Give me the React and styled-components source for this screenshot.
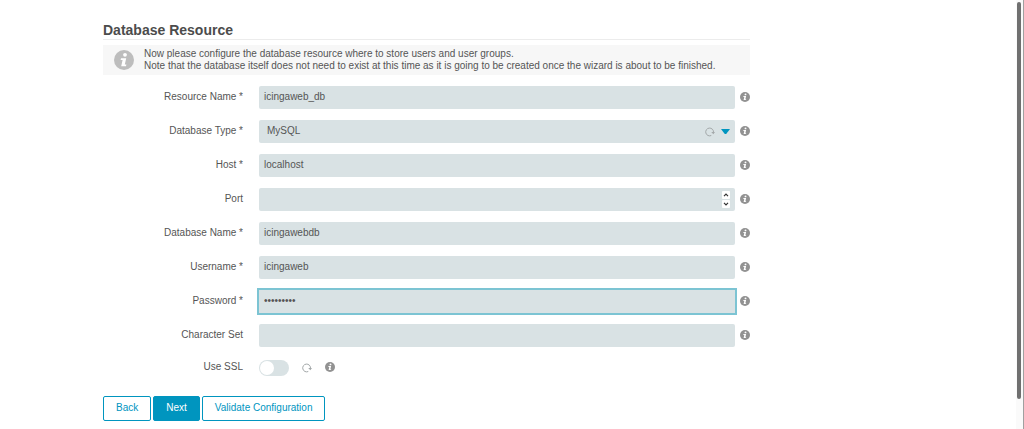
import React from 'react';
import styled, { createGlobalStyle, css, ThemeProvider } from 'styled-components';

const theme = {
  colors: {
    text: '#555',
    heading: '#4c4c4c',
    field: '#d9e2e4',
    primary: '#0095bf',
    focus: '#7cc4d3',
    icon: '#929292',
    muted: '#a3a8a9',
    hint: '#f7f7f7',
    line: '#ececec',
  },
};

const GlobalStyle = createGlobalStyle`
  * {
    box-sizing: border-box;
  }
  body {
    margin: 0;
    background-color: #fff;
    color: ${theme.colors.text};
    font-family: 'Liberation Sans', Arial, Helvetica, sans-serif;
    font-size: 10px;
    line-height: 12px;
  }
`;
const Page = styled.main`
  padding: 22px 24px 8px 103px;
`;
const Wizard = styled.form`
  max-width: 647px;
`;
const Title = styled.h1`
  margin: 0 0 5px;
  padding-bottom: 1px;
  border-bottom: 1px solid ${({ theme }) => theme.colors.line};
  color: ${({ theme }) => theme.colors.heading};
  font-size: 14px;
  line-height: 16px;
`;
const Hint = styled.div`
  display: flex;
  align-items: center;
  gap: 10px;
  min-height: 30px;
  margin-bottom: 11px;
  padding: 3px 11px;
  background-color: ${({ theme }) => theme.colors.hint};
`;
const HintText = styled.p`
  margin: 0;
`;
const Fields = styled.div`
  display: grid;
  gap: 11px;
`;
const Row = styled.div`
  display: grid;
  grid-template-columns: 140px 1fr 10px;
  align-items: center;
  column-gap: 5px;
  min-height: ${({ $short }) => ($short ? 19 : 23)}px;
`;
const Label = styled.label`
  padding-bottom: 2px;
  text-align: right;
`;
const Control = styled.div`
  display: flex;
  align-items: center;
  position: relative;
  margin-left: 11px;
`;
const HelpIcon = styled.span`
  display: flex;
  padding-bottom: 2px;
`;
const fieldStyle = css`
  width: 100%;
  height: 23px;
  padding: 0 5px 2px;
  border: 0;
  border-radius: ${({ $active }) => ($active ? 0 : 2)}px;
  background-color: ${({ theme }) => theme.colors.field};
  color: inherit;
  font: inherit;
`;
const Input = styled.input`
  ${fieldStyle}
  appearance: textfield;
  outline: ${({ $active, theme }) => ($active ? `2px solid ${theme.colors.focus}` : 'none')};

  &::-webkit-inner-spin-button {
    display: none;
  }
`;
const Select = styled.select`
  ${fieldStyle}
  padding-left: 8px;
  appearance: none;
`;
const Adornment = styled.div`
  display: flex;
  align-items: center;
  gap: 6px;
  position: absolute;
  right: 5px;
  pointer-events: none;
`;
const Spinner = styled.div`
  display: grid;
  gap: 1px;
`;
const SpinButton = styled.button`
  display: grid;
  place-items: center;
  width: 8px;
  height: 8px;
  padding: 0;
  border: 0;
  border-radius: 1px;
  background-color: #fff;
  color: #333;
`;
const SwitchGroup = styled.div`
  display: flex;
  align-items: center;
  gap: 13px;
  margin-left: 11px;
`;
const Switch = styled.input`
  appearance: none;
  display: flex;
  width: 30px;
  height: 16px;
  margin: 0;
  padding: 1px;
  border-radius: 8px;
  background-color: ${({ theme }) => theme.colors.field};

  &::before {
    content: '';
    width: 14px;
    height: 14px;
    border-radius: 50%;
    background-color: #fff;
  }
  &:checked {
    justify-content: flex-end;
    background-color: ${({ theme }) => theme.colors.primary};
  }
`;
const Actions = styled.div`
  display: flex;
  gap: 2px;
  margin-top: 19px;
`;
const Button = styled.button`
  height: 25px;
  padding: 0 12px 1px;
  border: 1px solid ${({ theme }) => theme.colors.primary};
  border-radius: 2px;
  background-color: ${({ $primary, theme }) => ($primary ? theme.colors.primary : '#fff')};
  color: ${({ $primary, theme }) => ($primary ? '#fff' : theme.colors.primary)};
  font: inherit;
`;
const ScrollTrack = styled.div`
  position: fixed;
  top: 0;
  right: 0;
  bottom: 0;
  width: 8px;
  padding: 2px 2px 30px 1px;
  border-right: 1px solid #a0a0a0;
  background-color: #fafafa;
`;
const ScrollThumb = styled.div`
  height: 100%;
  border-radius: 2px;
  background-color: #707070;
`;

const InfoIcon = ({ size = 10, color = theme.colors.icon }) => (
  <svg width={size} height={size} viewBox="0 0 20 20" aria-hidden="true">
    <circle cx="10" cy="10" r="10" fill={color} />
    <circle cx="11" cy="4.8" r="1.9" fill="#fff" />
    <path d="M7 8.2h5.2l-1.4 6.2h1.6l-.4 1.8H7.2l1.4-6.2H6.6z" fill="#fff" />
  </svg>
);

const ReloadIcon = () => (
  <svg width="10" height="10" viewBox="0 0 20 20" aria-hidden="true">
    <path d="M12.5 17A7.8 7.8 0 1 1 17 10.5" fill="none" stroke={theme.colors.muted} strokeWidth="2" />
    <path d="M12.5 10H20l-3.4 4.5z" fill={theme.colors.muted} />
  </svg>
);

const CaretIcon = () => (
  <svg width="9" height="5" viewBox="0 0 9 5" aria-hidden="true">
    <path d="M0 0h9L5.2 5h-1.4z" fill={theme.colors.primary} />
  </svg>
);

const Chevron = ({ down }) => (
  <svg width="6" height="4" viewBox="0 0 6 4" aria-hidden="true">
    <path d={down ? 'M1 .8l2 2 2-2' : 'M1 3.2l2-2 2 2'} fill="none" stroke="currentColor" strokeWidth="1.2" />
  </svg>
);

const Field = ({ id, label, children }) => (
  <Row>
    <Label htmlFor={id}>{label}</Label>
    <Control>{children}</Control>
    <HelpIcon>
      <InfoIcon />
    </HelpIcon>
  </Row>
);

const TextField = ({ id, label, value = '', ...rest }) => (
  <Field id={id} label={label}>
    <Input id={id} defaultValue={value} {...rest} />
  </Field>
);

const App = () => (
  <ThemeProvider theme={theme}>
    <GlobalStyle />
    <Page>
      <Wizard onSubmit={(e) => e.preventDefault()}>
        <Title>Database Resource</Title>
        <Hint>
          <InfoIcon size={20} color="#bdbdbd" />
          <HintText>
            Now please configure the database resource where to store users and user groups.
            <br />
            Note that the database itself does not need to exist at this time as it is going to be
            created once the wizard is about to be finished.
          </HintText>
        </Hint>
        <Fields>
          <TextField id="name" label="Resource Name *" value="icingaweb_db" />
          <Field id="type" label="Database Type *">
            <Select id="type" defaultValue="mysql">
              <option value="mysql">MySQL</option>
              <option value="pgsql">PostgreSQL</option>
            </Select>
            <Adornment>
              <ReloadIcon />
              <CaretIcon />
            </Adornment>
          </Field>
          <TextField id="host" label="Host *" value="localhost" />
          <Field id="port" label="Port">
            <Input id="port" type="number" />
            <Adornment>
              <Spinner>
                <SpinButton type="button" tabIndex={-1} aria-label="Increase"><Chevron /></SpinButton>
                <SpinButton type="button" tabIndex={-1} aria-label="Decrease"><Chevron down /></SpinButton>
              </Spinner>
            </Adornment>
          </Field>
          <TextField id="dbname" label="Database Name *" value="icingawebdb" />
          <TextField id="username" label="Username *" value="icingaweb" />
          <TextField id="password" label="Password *" type="password" value="icingaweb" $active />
          <TextField id="charset" label="Character Set" />
          <Row $short>
            <Label htmlFor="ssl">Use SSL</Label>
            <SwitchGroup>
              <Switch id="ssl" type="checkbox" />
              <ReloadIcon />
              <HelpIcon>
                <InfoIcon />
              </HelpIcon>
            </SwitchGroup>
          </Row>
        </Fields>
        <Actions>
          <Button type="button">Back</Button>
          <Button type="submit" $primary>Next</Button>
          <Button type="button">Validate Configuration</Button>
        </Actions>
      </Wizard>
    </Page>
    <ScrollTrack>
      <ScrollThumb />
    </ScrollTrack>
  </ThemeProvider>
);

export default App;
